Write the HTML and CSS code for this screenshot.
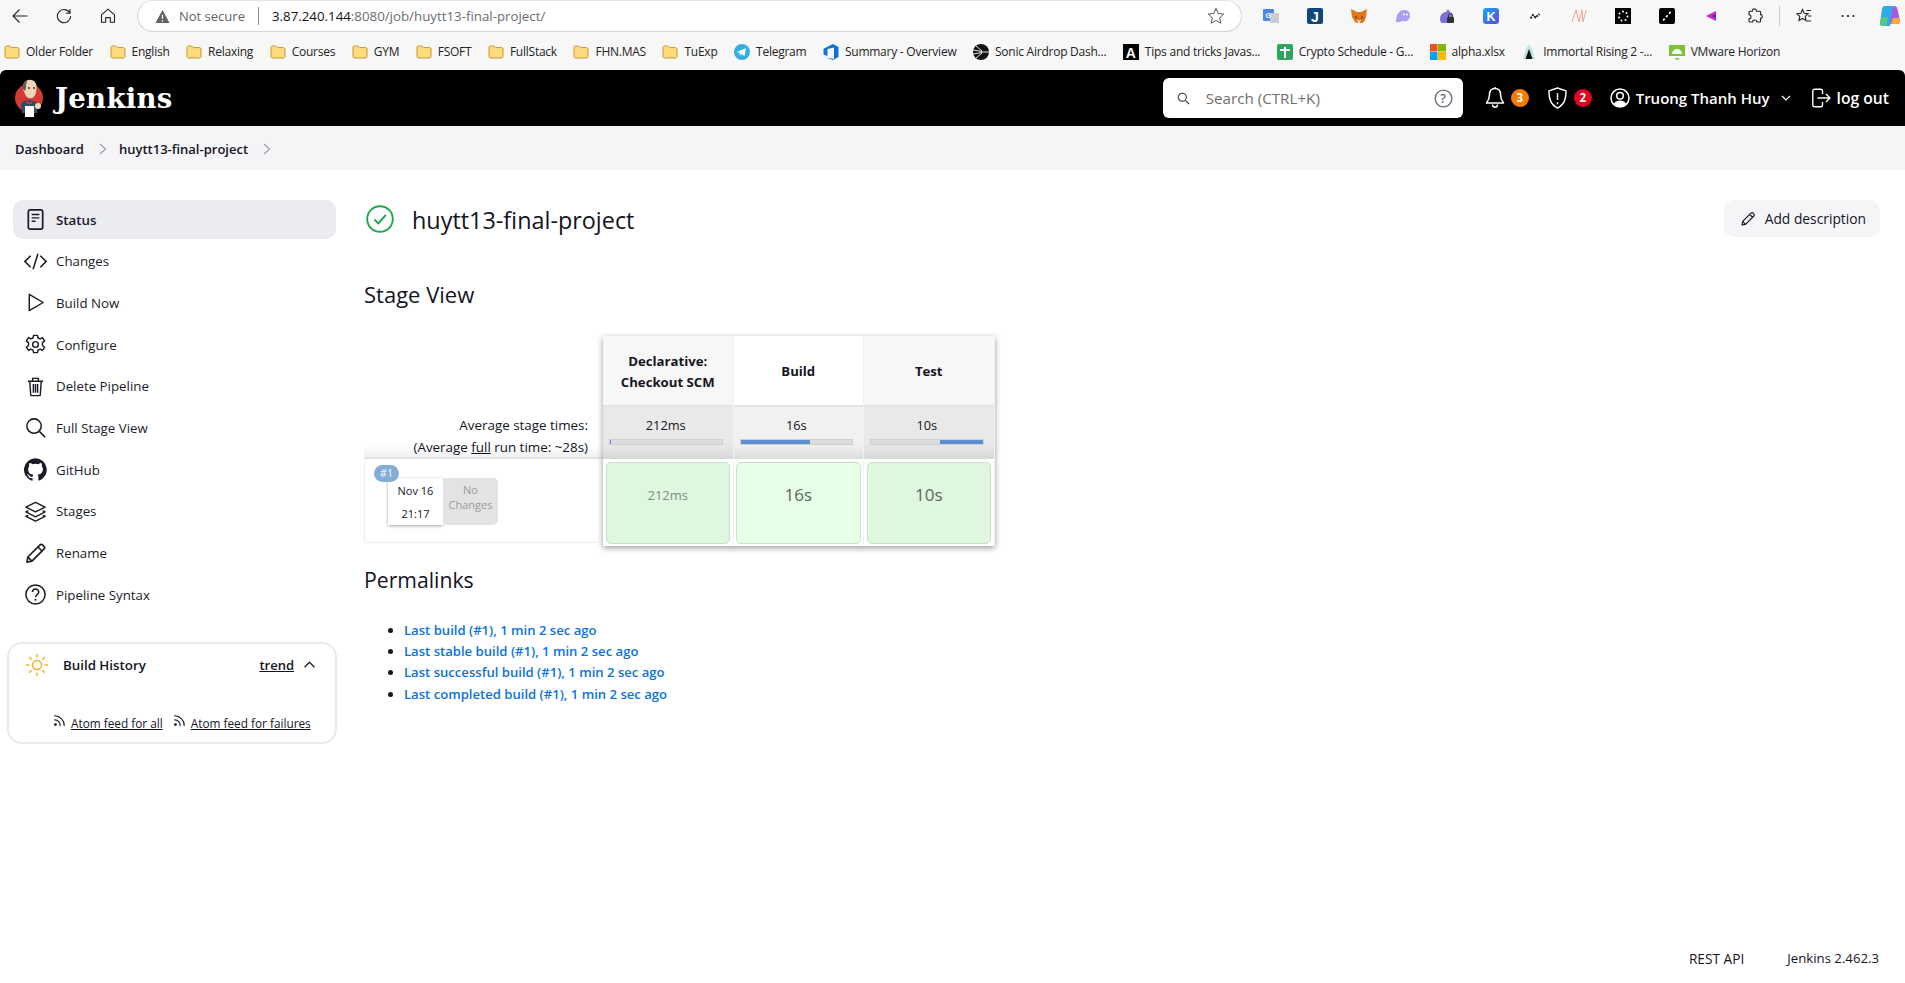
FILE: index.html
```html
<!DOCTYPE html>
<html lang="en">
<head>
    <meta charset="UTF-8">
    <meta name="viewport" content="width=device-width, initial-scale=1.0">
    <title>huytt13-final-project - Jenkins</title>
    <link rel="stylesheet" href="styles.css">
</head>
<body>
    <svg class="sprites" aria-hidden="true">
        <symbol id="folder" viewBox="0 0 16 16">
            <path d="M1 3.5C1 2.7 1.6 2 2.4 2h3.4l1.6 1.6h6.2c.8 0 1.4.6 1.4 1.4v7.6c0 .8-.6 1.4-1.4 1.4H2.4C1.6 14 1 13.4 1 12.6z" fill="#fcdc7e" stroke="#c8982c" stroke-width="1"/>
        </symbol>
        <symbol id="pencil" viewBox="0 0 24 24">
            <path d="M16.5 3.2a2.2 2.2 0 0 1 3.1 0l1.2 1.2a2.2 2.2 0 0 1 0 3.1L8.3 20 3 21l1-5.3z M14.6 5.2l4.2 4.2 M4 15.7L8.3 20" fill="none" stroke="currentColor" stroke-width="1.7" stroke-linejoin="round"/>
        </symbol>
        <symbol id="rss" viewBox="0 0 16 16">
            <circle cx="3" cy="13" r="1.7" fill="currentColor"/>
            <path d="M2 7.2c3.7 0 6.8 3 6.8 6.8 M2 2.2c6.5 0 11.8 5.3 11.8 11.8" fill="none" stroke="currentColor" stroke-width="1.4" stroke-linecap="round"/>
        </symbol>
    </svg>

    <!-- browser chrome -->
    <div class="browser-bar">
        <svg class="tool-icon" viewBox="0 0 16 16"><path d="M15.5 8H1M7.5 1.5L1 8l6.5 6.5" fill="none" stroke="#222" stroke-width="1.1"/></svg>
        <svg class="tool-icon" viewBox="0 0 16 16"><path d="M13.8 5A6.6 6.6 0 1 0 14.6 8M14 1v4.2H9.8" fill="none" stroke="#222" stroke-width="1.1"/></svg>
        <svg class="tool-icon" viewBox="0 0 16 16"><path d="M8 1.2L1.5 6.8v7.4h4.2V9.6h4.6v4.6h4.2V6.8z" fill="none" stroke="#222" stroke-width="1.1" stroke-linejoin="round"/></svg>
        <div class="address-bar">
            <svg class="warn-icon" viewBox="0 0 16 16"><path d="M8 1L.5 15h15z" fill="#5f6368"/><path d="M8 6v4.5M8 12v1.6" stroke="#fff" stroke-width="1.4"/></svg>
            <span class="not-secure">Not secure</span>
            <span class="address-sep"></span>
            <span class="url"><b>3.87.240.144</b>:8080/job/huytt13-final-project/</span>
            <svg class="star-icon" viewBox="0 0 18 18"><path d="M9 1.5l2.3 5 5.4.6-4 3.7 1.1 5.4L9 13.5l-4.8 2.7 1.1-5.4-4-3.7 5.4-.6z" fill="none" stroke="#555" stroke-width="1"/></svg>
        </div>
        <div class="extensions">
            <svg class="ext" viewBox="0 0 16 16"><rect x="0" y="1" width="11" height="12" rx="1" fill="#4a86e8"/><rect x="7" y="5" width="9" height="10" rx="1" fill="#c9ccd3"/><text x="2.5" y="10" class="ext-text" font-size="7" fill="#fff">G</text></svg>
            <svg class="ext" viewBox="0 0 16 16"><rect width="16" height="16" rx="2" fill="#12477c"/><text x="4" y="13.5" class="ext-text" font-size="14" fill="#fff">J</text></svg>
            <svg class="ext" viewBox="0 0 16 16"><path d="M0 1l6 3h4l6-3-1 8-2 5-2 1H6l-2-1-3-5z" fill="#e2761b"/><path d="M4 8l2 1-1 2zM12 8l-2 1 1 2z" fill="#233447"/><path d="M6 12h4l-1 3H7z" fill="#f6c79c"/></svg>
            <svg class="ext" viewBox="0 0 16 16"><path d="M1 14c0-7 3-12 8-12s6 3 6 6c0 4-4 6-7 5-2 0-4 2-7 1z" fill="#ab9ff2"/><circle cx="9" cy="6.5" r="1" fill="#fff"/><circle cx="12" cy="6.5" r="1" fill="#fff"/></svg>
            <svg class="ext" viewBox="0 0 16 16"><path d="M1 11c0-4 3-7 6-7l2-3 2 3c2 1 3 3 3 5l-4 6H3c-1 0-2-2-2-4z" fill="#7b6fd8"/><rect x="8" y="9" width="7" height="6" rx="1" fill="#333"/><path d="M9.5 9V7.5a2 2 0 0 1 4 0V9" fill="none" stroke="#333"/></svg>
            <svg class="ext" viewBox="0 0 16 16"><defs><linearGradient id="kg" x1="0" y1="0" x2="1" y2="1"><stop offset="0" stop-color="#1aa5f5"/><stop offset="1" stop-color="#5a4be0"/></linearGradient></defs><rect width="16" height="16" rx="3" fill="url(#kg)"/><text x="3.4" y="13" class="ext-text" font-size="12.5" fill="#fff">K</text></svg>
            <svg class="ext" viewBox="0 0 16 16"><circle cx="8" cy="8" r="8" fill="#fff"/><path d="M3.5 10.5L6 7l2.5 2.5L12.5 6" fill="none" stroke="#111" stroke-width="1.8" stroke-dasharray="2 1"/></svg>
            <svg class="ext" viewBox="0 0 16 16"><path d="M1 14L5 2l3 12 3-12 1 12 3-12" fill="none" stroke="#f0a58f" stroke-width="1"/></svg>
            <svg class="ext" viewBox="0 0 16 16"><rect width="16" height="16" fill="#000"/><g fill="#fff"><circle cx="8" cy="3.5" r="1"/><circle cx="11.5" cy="5" r="1"/><circle cx="12.5" cy="8.5" r="1"/><circle cx="10.5" cy="12" r="1"/><circle cx="6.5" cy="12.5" r="1"/><circle cx="4" cy="9.5" r="1"/><circle cx="4.5" cy="5.5" r="1"/></g></svg>
            <svg class="ext" viewBox="0 0 16 16"><rect width="16" height="16" rx="2" fill="#000"/><path d="M4 12.5l8-9" stroke="#fff" stroke-width="1.6" stroke-dasharray="2.5 2"/></svg>
            <svg class="ext" viewBox="0 0 16 16"><path d="M13 3v10L3 8z" fill="#d026c8"/><path d="M13 6v4L9 8z" fill="#3a2fb8"/></svg>
            <svg class="ext" viewBox="0 0 16 16"><path d="M6 1.2c1.6-.8 3.4.2 3.4 2h3.2c.6 0 1 .4 1 1v2.4c2 0 2.4 3.8 0 3.8v2.6c0 .6-.4 1-1 1H9.8c0-2.6-4.2-2.6-4.2 0H3c-.6 0-1-.4-1-1V10.800c2.600 0 2.600-4.200 0-4.200V4.200c0-.6.4-1 1-1h2.300C5.300 2.400 5.400 1.600 6 1.200z" fill="none" stroke="#222" stroke-width="1.100"/></svg>
            <span class="ext-sep"></span>
            <svg class="ext" viewBox="0 0 16 16"><path d="M6.500 1.500l1.700 3.700 4 .4-3 2.800.8 4L6.500 10.400 3 12.400l.8-4-3-2.800 4-.4z" fill="none" stroke="#222" stroke-width="1.100"/><path d="M10.500 2.500H15M12 8h3.500M10.500 13H15" stroke="#222" stroke-width="1.100"/></svg>
            <svg class="ext" viewBox="0 0 16 16"><circle cx="2.500" cy="8" r="1.100" fill="#222"/><circle cx="8" cy="8" r="1.100" fill="#222"/><circle cx="13.500" cy="8" r="1.100" fill="#222"/></svg>
            <svg class="copilot" viewBox="0 0 22 22">
                <path d="M6 1h9l-4 20H4c-2 0-3-1-3-3L3 4c.2-2 1.500-3 3-3z" fill="#2fa8ec"/>
                <path d="M15 1c2 0 3 1 3.500 3L21 16c.3 2-1 3-3 3h-7L13 6c.2-2 1-5 2-5z" fill="#a65be0"/>
                <path d="M3 12h6l-2 9H4c-2 0-3-1-3-3z" fill="#58c878"/>
                <path d="M14 13h6.500l.5 3c.3 2-1 3-3 3h-6z" fill="#f5a93a"/>
            </svg>
        </div>
    </div>

    <div class="bookmarks">
        <a class="bookmark"><svg class="bm-icon"><use href="#folder"/></svg>Older Folder</a>
        <a class="bookmark"><svg class="bm-icon"><use href="#folder"/></svg>English</a>
        <a class="bookmark"><svg class="bm-icon"><use href="#folder"/></svg>Relaxing</a>
        <a class="bookmark"><svg class="bm-icon"><use href="#folder"/></svg>Courses</a>
        <a class="bookmark"><svg class="bm-icon"><use href="#folder"/></svg>GYM</a>
        <a class="bookmark"><svg class="bm-icon"><use href="#folder"/></svg>FSOFT</a>
        <a class="bookmark"><svg class="bm-icon"><use href="#folder"/></svg>FullStack</a>
        <a class="bookmark"><svg class="bm-icon"><use href="#folder"/></svg>FHN.MAS</a>
        <a class="bookmark"><svg class="bm-icon"><use href="#folder"/></svg>TuExp</a>
        <a class="bookmark"><svg class="bm-icon" viewBox="0 0 16 16"><circle cx="8" cy="8" r="8" fill="#37aee2"/><path d="M3 8l9-3.800-1.500 8-3-2.200-1.500 1.500-.4-2.500z" fill="#fff"/></svg>Telegram</a>
        <a class="bookmark"><svg class="bm-icon" viewBox="0 0 16 16"><path d="M10 0l5.500 3v10L10 16l-7-2.500L11 15V3.500L4.500 5v7L.5 10.500V4.800z" fill="#0b72d6"/></svg>Summary - Overview</a>
        <a class="bookmark"><svg class="bm-icon" viewBox="0 0 16 16"><circle cx="8" cy="8" r="8" fill="#111"/><path d="M0 6l9 1.500M0 10l9-1.500M3 2l6 5M3 14l6-5M9 8h7" stroke="#fff" stroke-width=".9"/></svg>Sonic Airdrop Dash...</a>
        <a class="bookmark"><svg class="bm-icon" viewBox="0 0 16 16"><rect width="16" height="16" fill="#000"/><text x="2.800" y="13.500" class="ext-text" font-size="14" fill="#fff">A</text></svg>Tips and tricks Javas...</a>
        <a class="bookmark"><svg class="bm-icon" viewBox="0 0 16 16"><rect width="16" height="16" rx="2" fill="#2da55c"/><path d="M3 6h10M8 3v11" stroke="#fff" stroke-width="2"/></svg>Crypto Schedule - G...</a>
        <a class="bookmark"><svg class="bm-icon" viewBox="0 0 16 16"><rect width="7.500" height="7.500" fill="#f25022"/><rect x="8" width="8" height="7.500" fill="#7fba00"/><rect y="8" width="7.500" height="8" fill="#00a4ef"/><rect x="8" y="8" width="8" height="8" fill="#ffb900"/></svg>alpha.xlsx</a>
        <a class="bookmark"><svg class="bm-icon" viewBox="0 0 16 16"><path d="M8 0l3 5 3 10H2L5 5z" fill="#bfe3e0"/><path d="M8 5l3.500 10h-7z" fill="#111"/></svg>Immortal Rising 2 -...</a>
        <a class="bookmark"><svg class="bm-icon" viewBox="0 0 16 16"><rect y="1" width="16" height="11" fill="#7cc233"/><path d="M3 10a5 5 0 0 1 10 0z" fill="#fff"/><path d="M6 14h4v1.500H6z" fill="#7cc233"/></svg>VMware Horizon</a>
    </div>

    <header class="top-header">
        <a class="brand">
            <svg class="brand-logo" viewBox="0 0 28 38">
                <circle cx="14" cy="19" r="14" fill="#d33833"/>
                <path d="M6 26c1-4 5-5 8-5s7 1 9 5l-1 8H7z" fill="#2d4b6b"/>
                <path d="M11 21l4 3 3-3-1 4h-5z" fill="#d33833"/>
                <path d="M8 8c0-5 4-8 8-7 4 0 6 4 5.500 8 0 4-1 8-4 10-3 1-6 0-7.500-4-1-2-2-4-2-7z" fill="#f0d6b7"/>
                <path d="M8 10c-.5-5 2-8 5-9-2 2-2 5-2 8l-1 3z" fill="#5b5b5b"/>
                <circle cx="14" cy="9" r=".9" fill="#222"/><circle cx="19" cy="9" r=".9" fill="#222"/>
                <rect x="10" y="27" width="9" height="11" fill="#fff"/>
                <circle cx="23" cy="27" r="3" fill="#f0d6b7"/>
            </svg>
            <span class="brand-name">Jenkins</span>
        </a>
        <div class="search-box">
            <svg class="search-icon" viewBox="0 0 16 16"><circle cx="6.500" cy="6.500" r="5" fill="none" stroke="#333" stroke-width="1.300"/><path d="M10.200 10.200L15 15" stroke="#333" stroke-width="1.300"/></svg>
            <span class="search-text">Search (CTRL+K)</span>
            <svg class="help-icon" viewBox="0 0 20 20"><circle cx="10" cy="10" r="8.800" fill="none" stroke="#6d6b80" stroke-width="1.400"/><text x="6.700" y="14.500" class="help-mark">?</text></svg>
        </div>
        <svg class="head-icon" viewBox="0 0 20 24"><path d="M10 2.500c-3.500 0-5.500 2.500-5.500 6 0 4-1 6-3 8.500h17c-2-2.500-3-4.500-3-8.500 0-3.500-2-6-5.500-6zM7.500 18.500c0 3.500 5 3.500 5 0M10 1v1.500" fill="none" stroke="#fff" stroke-width="1.500" stroke-linejoin="round"/></svg>
        <span class="count count-orange">3</span>
        <svg class="head-icon shield" viewBox="0 0 22 24"><path d="M11 1.500L20 4.500c0 8-1.500 14-9 18-7.500-4-9-10-9-18zM11 7v7M11 16.500v2" fill="none" stroke="#fff" stroke-width="1.500" stroke-linejoin="round"/></svg>
        <span class="count count-red">2</span>
        <svg class="head-icon user" viewBox="0 0 20 20"><circle cx="10" cy="10" r="9" fill="none" stroke="#fff" stroke-width="1.500"/><circle cx="10" cy="7.800" r="3.300" fill="none" stroke="#fff" stroke-width="1.500"/><path d="M3.800 16c1.500-2.800 3.500-3.600 6.200-3.600s4.700.8 6.200 3.600c-1.500 1.800-3.800 3-6.200 3s-4.700-1.200-6.200-3z" fill="#fff"/></svg>
        <span class="user-name">Truong Thanh Huy</span>
        <svg class="user-caret" viewBox="0 0 10 6"><path d="M1 1l4 4 4-4" fill="none" stroke="#fff" stroke-width="1.200"/></svg>
        <svg class="head-icon logout" viewBox="0 0 20 20"><path d="M11.500 6V3c0-1-.7-1.800-1.700-1.800H3.500C2.500 1.200 1.800 2 1.800 3v14c0 1 .7 1.800 1.700 1.800h6.300c1 0 1.700-.8 1.700-1.800v-3M6.500 10h12.500M15 6l4 4-4 4" fill="none" stroke="#fff" stroke-width="1.400" stroke-linejoin="round"/></svg>
        <span class="logout-text">log out</span>
    </header>

    <nav class="breadcrumb">
        <a>Dashboard</a>
        <svg class="crumb-sep" viewBox="0 0 8 12"><path d="M1 1l5.500 5L1 11" fill="none" stroke="#9a9aa5" stroke-width="1.100"/></svg>
        <a>huytt13-final-project</a>
        <svg class="crumb-sep" viewBox="0 0 8 12"><path d="M1 1l5.500 5L1 11" fill="none" stroke="#9a9aa5" stroke-width="1.100"/></svg>
    </nav>

    <div class="page-body">
        <aside class="side-panel">
            <a class="task task-active">
                <svg class="task-icon" viewBox="0 0 24 24"><rect x="4.500" y="2" width="15" height="20" rx="2" fill="none" stroke="currentColor" stroke-width="1.800"/><path d="M8 6.800h8M8 10.300h8M8 13.800h4" stroke="currentColor" stroke-width="1.500"/></svg>
                Status
            </a>
            <a class="task">
                <svg class="task-icon" viewBox="0 0 24 24"><path d="M7 6l-6 6 6 6M17 6l6 6-6 6M14.500 4l-5 16" fill="none" stroke="currentColor" stroke-width="1.600"/></svg>
                Changes
            </a>
            <a class="task">
                <svg class="task-icon" viewBox="0 0 24 24"><path d="M5.500 3.500v17L20 12z" fill="none" stroke="currentColor" stroke-width="1.500" stroke-linejoin="round"/></svg>
                Build Now
            </a>
            <a class="task">
                <svg class="task-icon" viewBox="0 0 24 24"><path d="M14 2.500l.6 2.700 2.300 1 2.400-1.400 2.200 3.400-2.200 1.800v3l2.200 1.800-2.200 3.400-2.400-1.400-2.300 1-.6 2.700h-4l-.6-2.700-2.300-1-2.400 1.400-2.200-3.400 2.200-1.800v-3L2.500 8.200l2.200-3.400 2.400 1.400 2.300-1 .6-2.700z" fill="none" stroke="currentColor" stroke-width="1.500" stroke-linejoin="round"/><circle cx="12" cy="12" r="3" fill="none" stroke="currentColor" stroke-width="1.500"/></svg>
                Configure
            </a>
            <a class="task">
                <svg class="task-icon" viewBox="0 0 24 24"><path d="M4 6.500h16M9 6V3.500h6V6M6 6.500l1 14c0 .6.500 1 1 1h8c.5 0 1-.4 1-1l1-14M9.800 9.500v9M12 9.500v9M14.200 9.500v9" fill="none" stroke="currentColor" stroke-width="1.500"/></svg>
                Delete Pipeline
            </a>
            <a class="task">
                <svg class="task-icon" viewBox="0 0 24 24"><circle cx="10.500" cy="10.500" r="7.500" fill="none" stroke="currentColor" stroke-width="1.600"/><path d="M16 16l6 6" stroke="currentColor" stroke-width="1.600"/></svg>
                Full Stage View
            </a>
            <a class="task">
                <svg class="task-icon" viewBox="0 0 16 16"><path d="M8 .2a8 8 0 0 0-2.500 15.600c.4.100.5-.2.500-.4v-1.400c-2.200.5-2.700-1-2.700-1-.4-.9-.9-1.200-.9-1.200-.7-.5.100-.5.100-.5.800.1 1.200.8 1.200.8.700 1.200 1.900.9 2.300.7.100-.5.300-.9.500-1.100-1.800-.2-3.600-.9-3.600-4 0-.9.300-1.600.8-2.100-.1-.2-.4-1 .1-2.100 0 0 .7-.2 2.200.8a7.600 7.600 0 0 1 4 0c1.500-1 2.200-.8 2.200-.8.400 1.100.2 1.900.1 2.100.5.600.8 1.300.8 2.100 0 3.100-1.900 3.700-3.700 3.900.3.300.6.800.6 1.500v2.200c0 .2.100.5.600.4A8 8 0 0 0 8 .2z" fill="currentColor"/></svg>
                GitHub
            </a>
            <a class="task">
                <svg class="task-icon" viewBox="0 0 24 24"><path d="M12 2.500L22 7.500l-10 5-10-5zM4.500 11L2 12.500l10 5 10-5-2.500-1.500M4.500 16L2 17l10 5 10-5-2.500-1" fill="none" stroke="currentColor" stroke-width="1.500" stroke-linejoin="round"/></svg>
                Stages
            </a>
            <a class="task">
                <svg class="task-icon"><use href="#pencil"/></svg>
                Rename
            </a>
            <a class="task">
                <svg class="task-icon" viewBox="0 0 24 24"><circle cx="12" cy="12" r="10" fill="none" stroke="currentColor" stroke-width="1.600"/><path d="M8.800 9.500c0-4.200 6.600-4.200 6.600 0 0 2.700-3.300 2.600-3.300 5" fill="none" stroke="currentColor" stroke-width="1.600"/><circle cx="12" cy="17.500" r="1.100" fill="currentColor"/></svg>
                Pipeline Syntax
            </a>

            <section class="history-card">
                <div class="history-head">
                    <svg class="sun-icon" viewBox="0 0 22 22"><circle cx="11" cy="11" r="4.500" fill="none" stroke="#f6b02c" stroke-width="1.500"/><path d="M11 0v3.500M11 18.500V22M0 11h3.500M18.500 11H22M3.200 3.200l2.500 2.500M16.300 16.300l2.500 2.500M3.200 18.800l2.500-2.500M16.300 5.700l2.500-2.500" stroke="#f6b02c" stroke-width="1.500"/></svg>
                    <span class="history-title">Build History</span>
                    <a class="trend">trend</a>
                    <svg class="history-caret" viewBox="0 0 10 6"><path d="M.5 5.500L5 1l4.500 4.500" fill="none" stroke="#222" stroke-width="1.200"/></svg>
                </div>
                <div class="feeds">
                    <svg class="rss-icon"><use href="#rss"/></svg><a class="feed">Atom feed for all</a>
                    <svg class="rss-icon rss-second"><use href="#rss"/></svg><a class="feed">Atom feed for failures</a>
                </div>
            </section>
        </aside>

        <main class="main-panel">
            <div class="job-head">
                <svg class="job-status" viewBox="0 0 28 28"><circle cx="14" cy="14" r="12.800" fill="none" stroke="#1ea64b" stroke-width="1.900"/><path d="M8.500 14.500l3.800 3.800 7.500-8.300" fill="none" stroke="#1ea64b" stroke-width="1.900"/></svg>
                <h1>huytt13-final-project</h1>
                <a class="add-desc"><svg class="add-desc-icon"><use href="#pencil"/></svg>Add description</a>
            </div>

            <h2 class="stage-title">Stage View</h2>

            <div class="stage-view">
                <div class="stage-left">
                    <div class="avg-label">
                        <span>Average stage times:</span>
                        <span>(Average <u>full</u> run time: ~28s)</span>
                    </div>
                    <div class="build-row">
                        <span class="build-badge">#1</span>
                        <div class="build-date">
                            <span>Nov 16</span>
                            <span>21:17</span>
                        </div>
                        <div class="no-changes">No<br>Changes</div>
                    </div>
                </div>
                <div class="stage-table">
                    <div class="stage-col">
                        <div class="col-head">Declarative:<br>Checkout SCM</div>
                        <div class="col-avg">212ms<div class="avg-bar"><span class="avg-fill fill-first"></span></div></div>
                        <div class="col-cell"><div class="stage-cell cell-small">212ms</div></div>
                    </div>
                    <div class="stage-col">
                        <div class="col-head">Build</div>
                        <div class="col-avg">16s<div class="avg-bar"><span class="avg-fill fill-second"></span></div></div>
                        <div class="col-cell"><div class="stage-cell">16s</div></div>
                    </div>
                    <div class="stage-col">
                        <div class="col-head">Test</div>
                        <div class="col-avg">10s<div class="avg-bar"><span class="avg-fill fill-third"></span></div></div>
                        <div class="col-cell"><div class="stage-cell">10s</div></div>
                    </div>
                </div>
            </div>

            <h2 class="permalinks-title">Permalinks</h2>
            <ul class="permalinks">
                <li><a>Last build (#1), 1 min 2 sec ago</a></li>
                <li><a>Last stable build (#1), 1 min 2 sec ago</a></li>
                <li><a>Last successful build (#1), 1 min 2 sec ago</a></li>
                <li><a>Last completed build (#1), 1 min 2 sec ago</a></li>
            </ul>
        </main>
    </div>

    <footer class="page-footer">
        <a class="rest-api">REST API</a>
        <span>Jenkins 2.462.3</span>
    </footer>
</body>
</html>
```

FILE: styles.css
```css
* {
    box-sizing: border-box;
}

html, body {
    height: 100%;
}

body {
    margin: 0;
    min-height: 983px;
    display: flex;
    flex-direction: column;
    background: #f7f7f8;
    color: #14141f;
    font-family: "Open Sans", "Noto Sans", sans-serif;
    font-size: 13.3px;
    overflow: hidden;
}

.sprites {
    display: none;
}

/* browser chrome */
.browser-bar {
    height: 35px;
    display: flex;
    align-items: flex-start;
    padding-left: 12px;
    gap: 28px;
}

.tool-icon {
    width: 16px;
    height: 16px;
    margin-top: 8px;
}

.address-bar {
    width: 1105px;
    height: 32px;
    margin-left: -7px;
    margin-right: -7px;
    padding: 0 16px 0 17px;
    display: flex;
    align-items: center;
    background: #fff;
    border: 1px solid #d3d3d6;
    border-top-color: #e3e3e3;
    border-radius: 16px;
    font-size: 13px;
}

.warn-icon {
    width: 15px;
    height: 15px;
    margin-right: 9px;
}

.not-secure {
    color: #5f6368;
}

.address-sep {
    width: 1px;
    height: 18px;
    margin: 0 13px 0 13px;
    background: #8a8a8a;
}

.url {
    color: #6a6d72;
    flex: 1;
    font-size: 13.3px;
}

.url b {
    color: #111;
    font-weight: 400;
}

.star-icon {
    width: 18px;
    height: 18px;
}

.extensions {
    display: flex;
    align-items: center;
    gap: 28px;
    height: 32px;
}

.ext {
    width: 16px;
    height: 16px;
    flex: none;
}

.ext-text {
    font-family: "Liberation Sans", sans-serif;
    font-weight: 700;
}

.ext-sep {
    width: 1px;
    height: 20px;
    margin: 0 -12px;
    background: #c9c9cc;
}

.copilot {
    width: 22px;
    height: 22px;
    flex: none;
    margin-left: -5px;
}

.bookmarks {
    height: 33px;
    margin-bottom: 2px;
    display: flex;
    align-items: center;
    padding-left: 4px;
    gap: 16.5px;
    font-size: 12px;
    letter-spacing: -0.24px;
    color: #222;
    white-space: nowrap;
}

.bookmark {
    display: flex;
    align-items: center;
    gap: 6px;
}

.bm-icon {
    width: 16px;
    height: 16px;
    flex: none;
}

/* jenkins header */
.top-header {
    height: 56px;
    flex: none;
    display: flex;
    align-items: center;
    padding-left: 15px;
    background: #000;
    border-radius: 6px 6px 0 0;
    color: #fff;
}

.brand {
    display: flex;
    align-items: center;
    gap: 12px;
    margin-right: auto;
}

.brand-logo {
    width: 28px;
    height: 38px;
}

.brand-name {
    font-family: "DejaVu Serif", serif;
    font-size: 27.5px;
    font-weight: 700;
    letter-spacing: 0.3px;
}

.search-box {
    width: 300px;
    height: 40px;
    display: flex;
    align-items: center;
    padding: 0 10px 0 14px;
    background: #fff;
    border-radius: 6px;
}

.search-icon {
    width: 13px;
    height: 13px;
}

.search-text {
    flex: 1;
    margin-left: 16px;
    color: #707070;
    font-size: 15.2px;
}

.help-icon {
    width: 19px;
    height: 19px;
}

.help-mark {
    font-family: "Open Sans", sans-serif;
    font-size: 13px;
    font-weight: 600;
    fill: #6d6b80;
}

.head-icon {
    width: 20px;
    height: 24px;
    margin-left: 22px;
}

.count {
    width: 18px;
    height: 18px;
    margin-left: 6px;
    border-radius: 50%;
    font-size: 11.500px;
    font-weight: 700;
    line-height: 18px;
    text-align: center;
}

.count-orange {
    background: #f57c00;
}

.count-red {
    background: #e6001f;
}

.shield {
    margin-left: 18px;
    width: 21px;
}

.user {
    margin-left: 18px;
}

.user-name {
    margin-left: 6px;
    font-size: 15px;
    font-weight: 600;
}

.user-caret {
    width: 10px;
    height: 6px;
    margin-left: 11px;
}

.logout {
    margin-left: 20px;
}

.logout-text {
    margin: 0 16px 0 6px;
    font-size: 15.7px;
    font-weight: 600;
}

/* breadcrumb */
.breadcrumb {
    height: 44px;
    flex: none;
    display: flex;
    align-items: center;
    padding: 1px 0 0 15px;
    background: #f5f5f7;
    font-weight: 600;
    font-size: 13px;
}

.crumb-sep {
    width: 8px;
    height: 12px;
    margin: 0 12px 0 15px;
}

/* page */
.page-body {
    flex: 1;
    display: flex;
    background: #fff;
}

.side-panel {
    width: 364px;
    flex: none;
    padding: 30px 28px 0 13px;
    position: relative;
}

.task {
    height: 39px;
    margin-bottom: 2.700px;
    display: flex;
    align-items: center;
    padding-left: 11px;
    gap: 9px;
    border-radius: 10px;
    color: #1b1b28;
}

.task-active {
    background: #ebecf2;
    font-weight: 600;
}

.task-icon {
    width: 23px;
    height: 23px;
    flex: none;
}

.history-card {
    height: 102px;
    margin: 28px -1px 0 -6px;
    padding: 8px 17px;
    border: 2px solid #e9e9f0;
    border-radius: 15px;
}

.history-head {
    display: flex;
    align-items: center;
    height: 25px;
}

.sun-icon {
    width: 22px;
    height: 22px;
}

.history-title {
    margin-left: 15px;
    font-weight: 600;
    flex: 1;
}

.trend {
    font-weight: 600;
    font-size: 13px;
    text-decoration: underline;
}

.history-caret {
    width: 11px;
    height: 7px;
    margin: 0 3px 0 10px;
}

.feeds {
    display: flex;
    align-items: center;
    margin-top: 38px;
    margin-left: 27px;
    font-size: 11.8px;
    white-space: nowrap;
}

.rss-icon {
    width: 13px;
    height: 13px;
    margin: -6px 5px 0 0;
}

.rss-second {
    margin-left: 10px;
}

.feed {
    text-decoration: underline;
    font-weight: 500;
}

.main-panel {
    flex: 1;
    padding: 30px 25px 0 0;
}

.job-head {
    display: flex;
    align-items: center;
    height: 37px;
}

.job-status {
    width: 28px;
    height: 28px;
    margin: 0 18px 0 2px;
}

.job-head h1 {
    margin: 2px 0 0;
    font-size: 23.4px;
    font-weight: 500;
    flex: 1;
}

.add-desc {
    height: 37px;
    display: flex;
    align-items: center;
    gap: 9px;
    padding: 0 14px 0 16px;
    background: #f5f5f8;
    border-radius: 10px;
    font-weight: 500;
    font-size: 13.8px;
}

.add-desc-icon {
    width: 16px;
    height: 16px;
}

.stage-title,
.permalinks-title {
    margin: 0;
    font-size: 21.2px;
    font-weight: 500;
}

.stage-title {
    margin-top: 42px;
    line-height: 30px;
    font-size: 22px;
}

/* stage view */
.stage-view {
    display: flex;
    margin-top: 27px;
}

.stage-left {
    width: 239px;
    padding-top: 71px;
}

.avg-label {
    height: 52px;
    display: flex;
    flex-direction: column;
    justify-content: flex-end;
    align-items: flex-end;
    gap: 4px;
    padding: 0 15px 1px 0;
    font-size: 13.4px;
    line-height: 18px;
    background: linear-gradient(to bottom, #fff 75%, #f1f1f1 100%);
    border-bottom: 2px solid #e2e2e2;
}

.build-row {
    position: relative;
    width: 236px;
    height: 84px;
    display: flex;
    align-items: flex-start;
    padding: 19px 0 0 23px;
    border: 1px solid #eee;
    border-top: none;
}

.build-badge {
    position: absolute;
    left: 9px;
    top: 6px;
    width: 25px;
    height: 17px;
    border-radius: 9px;
    background: #85acd6;
    color: #fff;
    font-size: 10.500px;
    line-height: 17px;
    text-align: center;
}

.build-date {
    width: 55px;
    height: 47px;
    display: flex;
    flex-direction: column;
    align-items: center;
    justify-content: space-between;
    padding: 4px 0 2px;
    background: #fff;
    box-shadow: 0 1px 3px rgba(0, 0, 0, 0.35);
    font-size: 11px;
    line-height: 18px;
}

.no-changes {
    width: 55px;
    height: 47px;
    padding-top: 4px;
    background: #e3e3e3;
    border-radius: 0 5px 5px 0;
    color: #9c9c9c;
    font-size: 11px;
    line-height: 15px;
    text-align: center;
}

.stage-table {
    display: flex;
    height: 210px;
    box-shadow: 0 2px 6px rgba(0, 0, 0, 0.4);
    background: #fff;
}

.stage-col {
    width: 130.500px;
    border-right: 1px solid #f2f2f2;
}

.col-head {
    height: 71px;
    display: flex;
    align-items: center;
    justify-content: center;
    padding-top: 2px;
    text-align: center;
    font-size: 13.2px;
    font-weight: 700;
    line-height: 21px;
    background: #f7f7f7;
    border-bottom: 2px solid #e4e4e4;
}

.col-avg {
    height: 52px;
    padding: 8px 10px 0 6px;
    text-align: center;
    font-size: 12.800px;
    line-height: 20px;
    background: linear-gradient(to bottom, #e9e9e9 70%, #d8d8d8 100%);
}

.col-cell {
    height: 87px;
    padding: 3px 2.5px 2px;
}

.stage-cell {
    height: 82px;
    padding-top: 17px;
    border: 1px solid #c8e2c8;
    border-radius: 5px;
    background: #def7de;
    color: #5a675a;
    font-size: 17px;
    line-height: 30px;
    text-align: center;
}

.cell-small {
    font-size: 13px;
    color: #7f8f7f;
}

.stage-col:nth-child(2) .col-head {
    background: #fff;
}

.stage-col:nth-child(2) .col-avg {
    background: linear-gradient(to bottom, #f1f1f1 70%, #dedede 100%);
}

.stage-col:nth-child(2) .stage-cell {
    background: #e6ffe6;
}

.avg-bar {
    position: relative;
    height: 6px;
    margin-top: 4px;
    background: #dcdcdc;
    border: 1px solid #cfcfcf;
}

.avg-fill {
    position: absolute;
    top: 0;
    bottom: 0;
    background: #5c8ed6;
}

.fill-first {
    left: 0;
    width: 1px;
}

.fill-second {
    left: 0;
    width: 62%;
}

.fill-third {
    right: 0;
    width: 38%;
}

.permalinks-title {
    margin-top: 19px;
    line-height: 30px;
}

.permalinks {
    margin: 25px 0 0;
    padding-left: 40px;
    font-size: 13.1px;
    line-height: 21.2px;
    font-weight: 600;
}

.permalinks a {
    color: #0b72e0;
}

.page-footer {
    height: 50px;
    flex: none;
    display: flex;
    justify-content: flex-end;
    gap: 43px;
    padding: 0 26px 0 0;
    align-items: center;
    background: #fff;
    font-size: 13.2px;
}

.rest-api {
    font-size: 13.7px;
    font-weight: 500;
}
```
